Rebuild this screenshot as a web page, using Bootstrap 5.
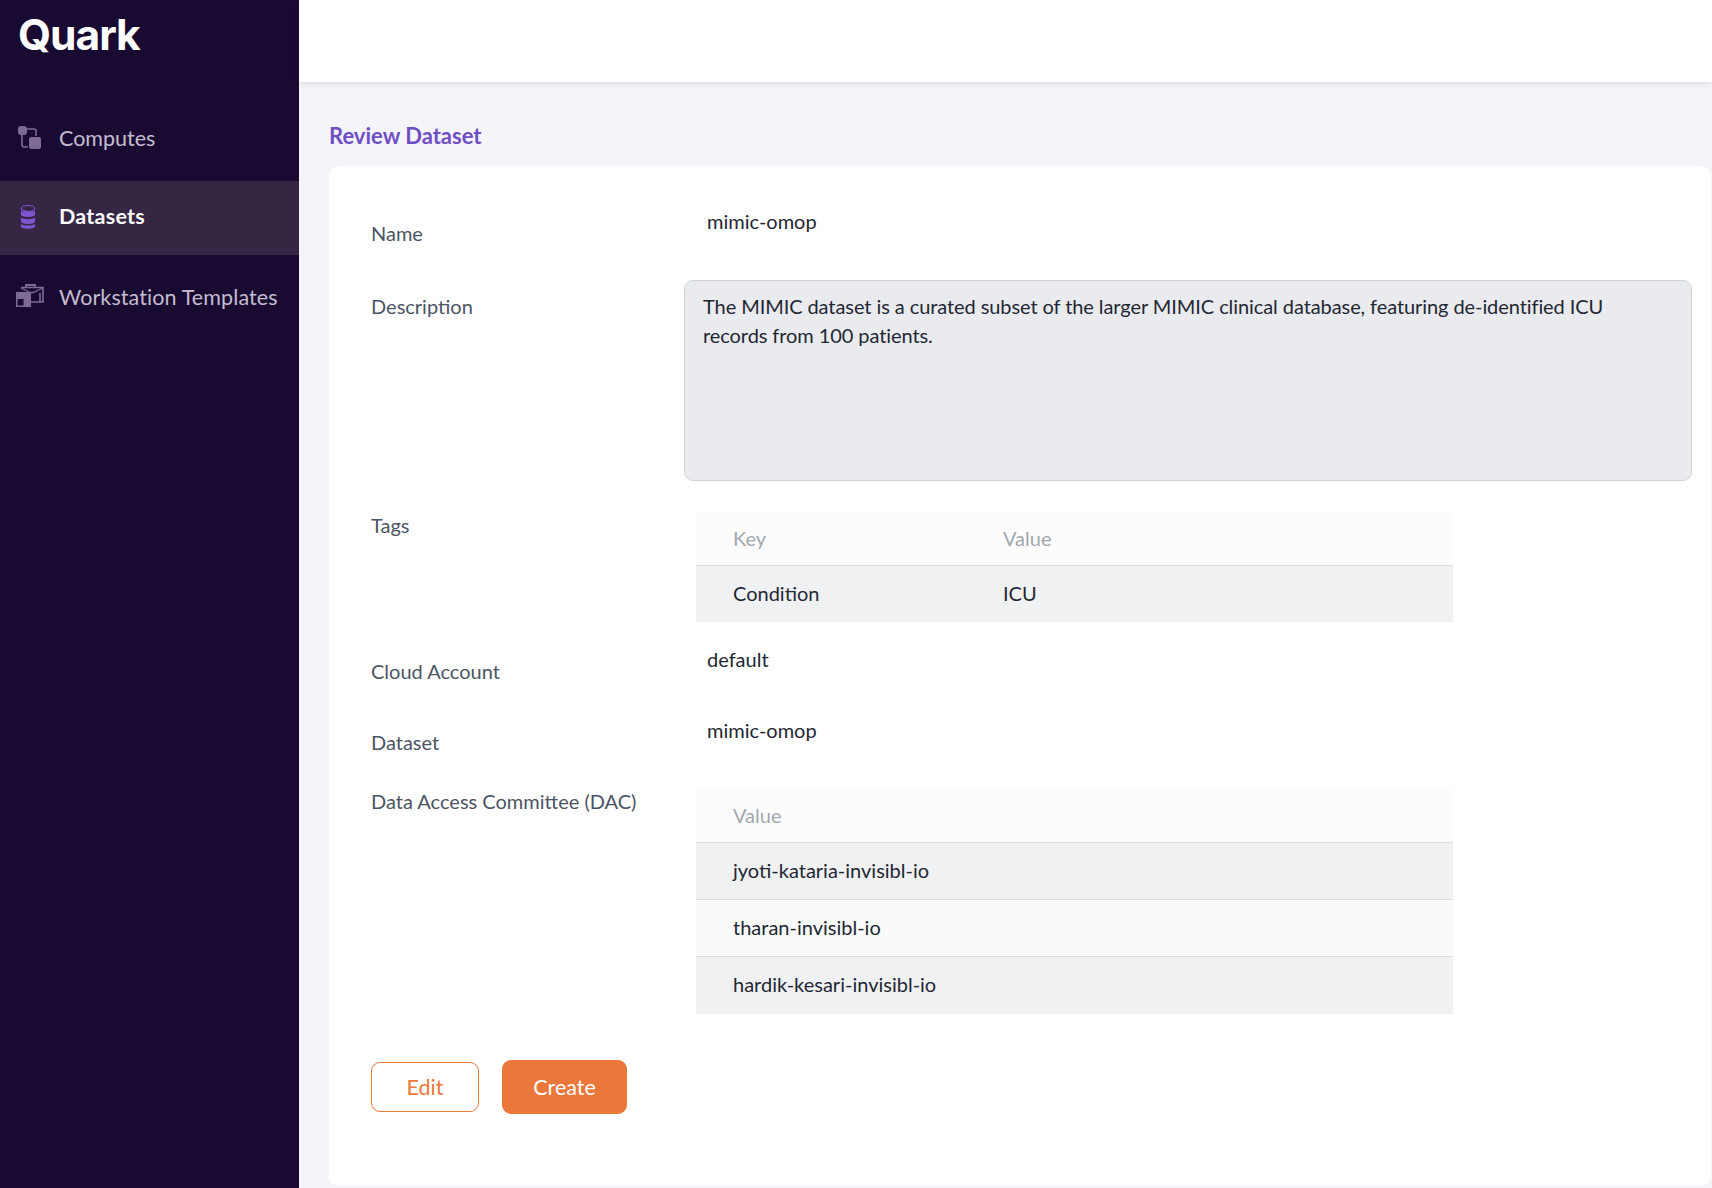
<!DOCTYPE html>
<html lang="en">
<head>
<meta charset="utf-8">
<title>Quark</title>
<link href="https://cdn.jsdelivr.net/npm/bootstrap@5.3.0/dist/css/bootstrap.min.css" rel="stylesheet">
<style>
html,body{height:100%;}
body{background:#f4f4fa;font-family:"Lato","Noto Sans",sans-serif;font-size:20px;line-height:29px;color:#1f2733;overflow:hidden;}
.app{height:1188px;}
.sidebar{width:299px;flex:none;background:#190a31;}
.brand{height:100px;padding:10px 0 0 18px;font-size:42.5px;line-height:50px;font-weight:700;color:#fff;letter-spacing:-1px;font-family:"Inter","Lato",sans-serif;}
.side-item{height:74px;color:#c4bdd0;text-decoration:none;padding-left:14px;font-size:21.5px;}
.side-item svg{flex:none;margin-right:15px;}
.side-item.active{background:#352643;color:#fff;font-weight:700;padding-bottom:3px;letter-spacing:.25px;}
.side-item.computes{height:76px;margin-bottom:5px;}
.side-item.workstation{padding-top:10px;letter-spacing:.1px;}
.side-item.workstation svg{margin-right:13px;}
.topbar{height:82px;background:#fff;box-shadow:0 2px 6px rgba(40,40,80,.10);}
.content{padding:0 1px 0 30px;}
.page-title{color:#6f4fc4;font-size:22px;font-weight:700;line-height:30px;padding:39px 0 15px;margin:0;}
.panel{background:#fff;border-radius:9px;padding:40px 19px 72px 42px;height:1020px;}
.label-col{width:313px;flex:none;color:#4b5563;}
.plain-row{display:flex;}
.name-row{height:74px;}
.name-row .label-col{padding-top:13px;}
.val{padding-left:23px;}
.name-row .val{padding-top:1px;}
.desc-row .label-col{padding-top:12px;}
textarea.desc{width:1008px;height:201px;background:#eaebef;border:1px solid #cfd4da;border-radius:9px;padding:11px 60px 11px 18px;font-size:20px;line-height:29px;letter-spacing:-.08px;color:#1f2733;resize:none;}
textarea.desc:focus{background:#eaebef;box-shadow:none;border-color:#cfd4da;}
.tags-row{margin-top:30px;}
.tags-row .label-col{padding-top:0;}
.kv{width:757px;margin:0 0 0 12px;font-size:20px;line-height:29px;--bs-table-bg:transparent;color:#1f2733;table-layout:fixed;}
.kv th,.kv td{padding:0 0 0 37px;vertical-align:middle;border:0;font-weight:400;}
.kv th{height:54px;padding-top:2px;color:#a3a8b0;background:#fcfcfc;border-bottom:1px solid #d9dce1;}
.kv td{height:57px;padding-bottom:1px;background:#f0f1f3;}
.kv tr.alt td{background:#f9fafa;border-top:1px solid #d9dce1;border-bottom:1px solid #d9dce1;}
.kv th.k,.kv td.k{width:270px;}
.dac-table th{height:53px;padding-top:1px;}
.dac-table tr:last-child td{height:58px;}
.cloud-row{height:73px;}
.cloud-row .val{padding-top:23px;}
.cloud-row .label-col{padding-top:35px;}
.data-row{height:94px;}
.data-row .val{padding-top:21px;}
.data-row .label-col{padding-top:33px;}
.dac-row .label-col{margin-top:-2px;}
.actions{margin-top:46px;gap:23px;height:54px;}
.btn-edit,.btn-create{font-size:21.5px;line-height:29px;border-radius:9px;display:flex;align-items:center;justify-content:center;padding:0;}
.btn-edit{width:108px;height:50px;color:#eb783a;border:1px solid #eb783a;background:#fff;}
.btn-create{width:125px;height:54px;color:#fff;background:#eb783a;border:1px solid #eb783a;}
</style>
</head>
<body>
<div class="app d-flex">
  <nav class="sidebar d-flex flex-column">
    <div class="brand">Quark</div>
    <a class="side-item computes d-flex align-items-center" href="#">
      <svg width="30" height="30" viewBox="0 -1 30 30"><rect x="4" y="2" width="9" height="9" rx="3" fill="#7d6b96"/><rect x="15" y="13" width="12" height="12" rx="2.500" fill="#7d6b96"/><path d="M13 5h7q2 0 2 2v5M8 11v10q0 2 2 2h4" fill="none" stroke="#7d6b96" stroke-width="1.600"/></svg>
      Computes</a>
    <a class="side-item active d-flex align-items-center" href="#">
      <svg width="30" height="30" viewBox="0 0 30 30"><ellipse cx="14" cy="6.500" rx="6.600" ry="3" fill="none" stroke="#7e57d0" stroke-width="1.200"/><path d="M7 8.500c1 2.200 13 2.200 14 0v4.500c-1 2.600-13 2.600-14 0z" fill="#7e57d0"/><path d="M7 15.500c2 2.200 12 2.200 14 0v4.500c-1 2.600-13 2.600-14 0z" fill="#7e57d0"/><path d="M7 22c2 2 12 2 14 0v2.500c-1 3-13 3-14 0z" fill="#7e57d0"/></svg>
      Datasets</a>
    <a class="side-item workstation d-flex align-items-center" href="#">
      <svg width="32" height="30" viewBox="0 2 32 30"><path d="M12 7V5h9v2" fill="none" stroke="#7d6b96" stroke-width="1.800"/><path d="M7 7.500H29V22H17M26 13v9" fill="none" stroke="#7d6b96" stroke-width="1.600"/><path d="M7 8l9 4.500h3l10-4.500" fill="none" stroke="#7d6b96" stroke-width="1.300"/><rect x="2" y="12" width="15" height="15" fill="#7d6b96"/><rect x="3.500" y="19" width="6" height="6.500" fill="#190a31"/></svg>
      Workstation Templates</a>
  </nav>
  <div class="flex-grow-1 d-flex flex-column">
    <header class="topbar"></header>
    <main class="content">
      <h1 class="page-title">Review Dataset</h1>
      <section class="panel">
        <div class="plain-row name-row"><div class="label-col">Name</div><div class="val">mimic-omop</div></div>
        <div class="plain-row desc-row"><div class="label-col">Description</div>
          <textarea class="form-control desc" readonly>The MIMIC dataset is a curated subset of the larger MIMIC clinical database, featuring de-identified ICU records from 100 patients.</textarea></div>
        <div class="plain-row tags-row"><div class="label-col">Tags</div>
          <table class="table kv"><thead><tr><th class="k">Key</th><th>Value</th></tr></thead>
          <tbody><tr><td class="k">Condition</td><td>ICU</td></tr></tbody></table></div>
        <div class="plain-row cloud-row"><div class="label-col">Cloud Account</div><div class="val">default</div></div>
        <div class="plain-row data-row"><div class="label-col">Dataset</div><div class="val">mimic-omop</div></div>
        <div class="plain-row dac-row"><div class="label-col">Data Access Committee (DAC)</div>
          <table class="table kv dac-table"><thead><tr><th>Value</th></tr></thead>
          <tbody><tr><td>jyoti-kataria-invisibl-io</td></tr><tr class="alt"><td>tharan-invisibl-io</td></tr><tr><td>hardik-kesari-invisibl-io</td></tr></tbody></table></div>
        <div class="actions d-flex align-items-center">
          <button type="button" class="btn btn-edit">Edit</button>
          <button type="button" class="btn btn-create">Create</button>
        </div>
      </section>
    </main>
  </div>
</div>
</body>
</html>
